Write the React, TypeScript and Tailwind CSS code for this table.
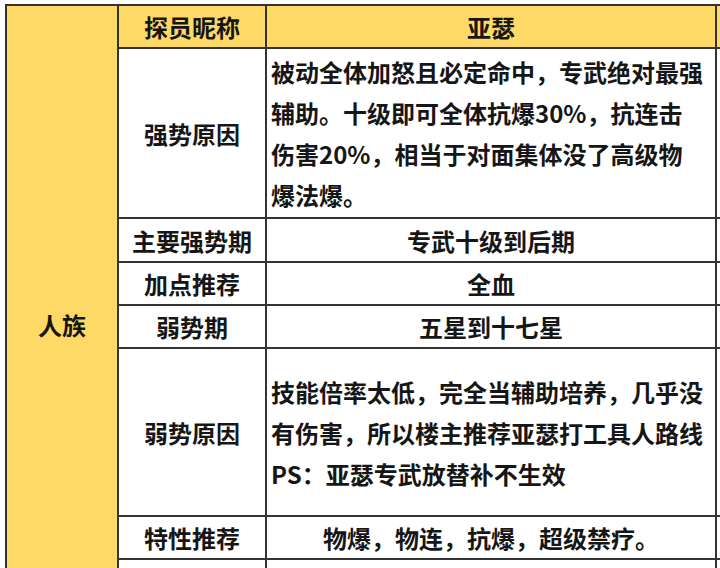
import React from 'react';

const cell = 'border-2 border-[#333] align-middle';
const label = `${cell} text-center`;

const rows: { name: string; h: string; body: React.ReactNode; left?: boolean }[] = [
    {
        name: '强势原因',
        h: 'h-[170px]',
        left: true,
        body: (
            <>
                被动全体加怒且必定命中，专武绝对最强
                <br />
                辅助。十级即可全体抗爆30%，抗连击
                <br />
                伤害20%，相当于对面集体没了高级物
                <br />
                爆法爆。
            </>
        ),
    },
    { name: '主要强势期', h: 'h-[44px]', body: '专武十级到后期' },
    { name: '加点推荐', h: 'h-[42px]', body: '全血' },
    { name: '弱势期', h: 'h-[42px]', body: '五星到十七星' },
    {
        name: '弱势原因',
        h: 'h-[168px]',
        left: true,
        body: (
            <>
                技能倍率太低，完全当辅助培养，几乎没
                <br />
                有伤害，所以楼主推荐亚瑟打工具人路线
                <br />
                PS：亚瑟专武放替补不生效
            </>
        ),
    },
    { name: '特性推荐', h: 'h-[42px]', body: '物爆，物连，抗爆，超级禁疗。' },
    { name: '伴宠推荐', h: 'h-[42px]', body: '尽享，高接' },
    { name: '', h: 'h-[48px]', body: '' },
];

export default function App() {
    return (
        <div className="w-[720px] h-[568px] overflow-hidden bg-white pt-[4px] pl-[5px]">
            <table
                className="table-fixed border-collapse w-[820px] text-[24px] leading-[41px] font-bold text-[#161616]"
                style={{ fontFamily: '"Noto Sans CJK SC", "Noto Sans", sans-serif' }}
            >
                <colgroup>
                    <col className="w-[112px]" />
                    <col className="w-[148px]" />
                    <col className="w-[450px]" />
                    <col className="w-[110px]" />
                </colgroup>
                <tbody>
                    <tr className="h-[43px] bg-[#ffd966]">
                        <td rowSpan={rows.length + 1} className={`${label} bg-[#ffd966] pb-[6px]`}>
                            人族
                        </td>
                        <td className={label}>探员昵称</td>
                        <td className={label}>亚瑟</td>
                        <td className={cell}></td>
                    </tr>
                    {rows.map((r, i) => (
                        <tr key={i} className={`${r.h} bg-white`}>
                            <td className={label}>{r.name}</td>
                            <td className={r.left ? `${cell} pl-[4px] whitespace-nowrap` : `${label} whitespace-nowrap`}>
                                {r.body}
                            </td>
                            <td className={cell}></td>
                        </tr>
                    ))}
                </tbody>
            </table>
        </div>
    );
}
